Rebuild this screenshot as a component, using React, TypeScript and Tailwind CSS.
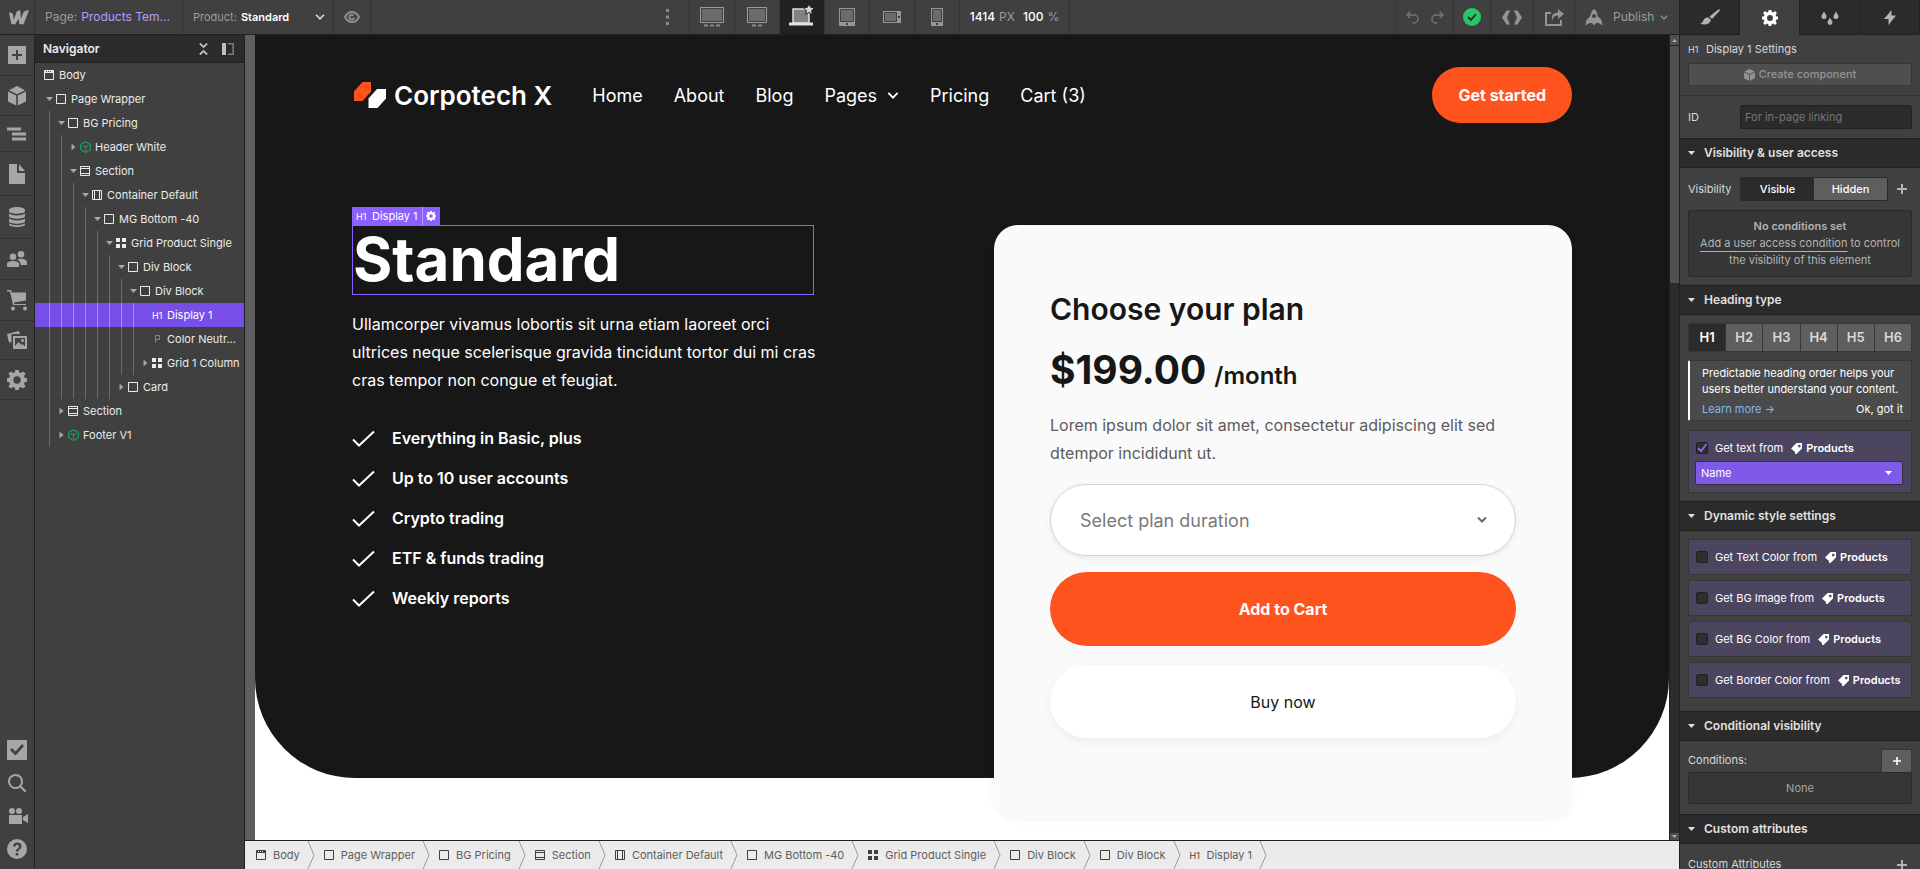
import type { ReactNode } from 'react';
import clsx from 'clsx';

/* ---------- icons ---------- */

type NodeKind = 'body' | 'box' | 'section' | 'container' | 'grid' | 'component' | 'h1' | 'paragraph';

function NodeIcon({ kind }: { kind: NodeKind }) {
    if (kind === 'h1') {
        return <span className="w-2.5 shrink-0 text-[9px] leading-none">H1</span>;
    }
    if (kind === 'component') {
        return (
            <svg viewBox="0 0 11 12" className="h-3 w-[11px] shrink-0" fill="none" stroke="#1f9d62" strokeWidth="1.2">
                <path d="M5.5 .7 10.3 3.3v5.4L5.5 11.3.7 8.7V3.3z" />
                <path d="M2.5 4.3 5.5 6l3-1.7M5.5 6v3.5" />
            </svg>
        );
    }
    if (kind === 'paragraph') {
        return (
            <svg viewBox="0 0 11 10" className="h-2.5 w-[11px] shrink-0" fill="none" stroke="#8f6cf5">
                <path d="M3.5 9V1.5h4v4h-4" />
            </svg>
        );
    }
    if (kind === 'grid') {
        return (
            <svg viewBox="0 0 10 10" className="h-2.5 w-2.5 shrink-0" fill="currentColor">
                <path d="M0 0h4v4H0zM6 0h4v4H6zM0 6h4v4H0zM6 6h4v4H6z" />
            </svg>
        );
    }
    return (
        <svg viewBox="0 0 10 10" className="h-2.5 w-2.5 shrink-0" fill="none" stroke="currentColor">
            <path d="M.5 .5h9v9h-9z" />
            {kind === 'body' && <path d="M0 1.5h2M3 1.5h1M5 1.5h1M7 1.5h3M0 2.5h10" />}
            {kind === 'section' && <path d="M0 2.5h10M0 7.5h10" />}
            {kind === 'container' && <path d="M2.5 0v10M7.5 0v10" />}
        </svg>
    );
}

const GEAR =
    'M8.3 0h3.4l.5 2.3 1.7.7 2.3-1.6 2.4 2.4L17 6.1l.7 1.7 2.3.5v3.4l-2.3.5-.7 1.7 1.6 2.3-2.4 2.4-2.3-1.6-1.7.7-.5 2.3H8.3l-.5-2.3-1.7-.7-2.3 1.6-2.4-2.4L3 13.9l-.7-1.7-2.3-.5V8.3l2.3-.5L3 6.1 1.4 3.8l2.4-2.4L6.1 3l1.7-.7zM10 6.3a3.7 3.7 0 1 0 0 7.4 3.7 3.7 0 0 0 0-7.4z';

function Gear({ className }: { className?: string }) {
    return (
        <svg viewBox="0 0 20 20" className={className} fill="currentColor" fillRule="evenodd">
            <path d={GEAR} />
        </svg>
    );
}

function Cube({ className }: { className?: string }) {
    return (
        <svg viewBox="0 0 18 20" className={className} fill="currentColor">
            <path d="M9 0 17.3 4.2 9 8.2.7 4.2zM0 5.6l8.2 4v10L0 15.5zM18 5.6l-8.2 4v10l8.2-4.1z" />
        </svg>
    );
}

function Tag() {
    return (
        <svg viewBox="0 0 12 11" className="h-[11px] w-3 shrink-0" fill="currentColor" fillRule="evenodd">
            <path d="M5.5 0H11v5.5L5.5 11H4V9L0 5.5zM8.3 1.8a1.3 1.3 0 1 0 0 2.6 1.3 1.3 0 0 0 0-2.6z" />
        </svg>
    );
}

function Plus({ className }: { className?: string }) {
    return (
        <svg viewBox="0 0 10 10" className={className} stroke="currentColor" strokeWidth="2">
            <path d="M5 0v10M0 5h10" />
        </svg>
    );
}

function Chevron({ className }: { className?: string }) {
    return (
        <svg viewBox="0 0 10 6" className={className} fill="none" stroke="currentColor" strokeWidth="1.6">
            <path d="M1 .7 5 4.8 9 .7" />
        </svg>
    );
}

/* ---------- top bar ---------- */

const devices: { label: string; icon: ReactNode; active?: boolean }[] = [
    {
        label: '1920px and up',
        icon: (
            <svg viewBox="0 0 24 20" className="h-5 w-6">
                <path d="M.5 .5h23v15H.5z" fill="#6b6b6b" stroke="#9b9b9b" />
                <path d="M1.5 1.5h21v13h-21z" fill="none" stroke="#404040" />
                <path d="M4 17.5h4v2H4zM10 17.5h4v2h-4zM16 17.5h4v2h-4z" fill="#8a8a8a" />
            </svg>
        ),
    },
    {
        label: '1440px and up',
        icon: (
            <svg viewBox="0 0 20 20" className="h-5 w-5">
                <path d="M.5 .5h19v15H.5z" fill="#6b6b6b" stroke="#9b9b9b" />
                <path d="M1.5 1.5h17v13h-17z" fill="none" stroke="#404040" />
                <path d="M5 17.5h4v2H5zM11 17.5h4v2h-4z" fill="#8a8a8a" />
            </svg>
        ),
    },
    {
        label: 'Base breakpoint',
        active: true,
        icon: (
            <svg viewBox="0 0 26 24" className="mb-1 h-6 w-[26px]">
                <path d="M4 6h16v14H4z" fill="#828282" stroke="#e0e0e0" strokeWidth="1.5" />
                <path d="M0 19.5h24v3H0z" fill="#e0e0e0" />
                <path
                    d="m20 .8 1.6 3.5 3.9.5-2.9 2.7.8 3.9-3.4-2-3.4 2 .8-3.9-2.9-2.7 3.9-.5z"
                    fill="#d9d9d9"
                    stroke="#212121"
                />
            </svg>
        ),
    },
    {
        label: 'Tablet',
        icon: (
            <svg viewBox="0 0 16 18" className="h-[18px] w-4">
                <path d="M0 0h16v18H0z" fill="#969696" />
                <path d="M1.5 1.5h13v12h-13z" fill="#6b6b6b" stroke="#404040" />
                <path d="M7 15h2v2H7z" fill="#404040" />
            </svg>
        ),
    },
    {
        label: 'Mobile landscape',
        icon: (
            <svg viewBox="0 0 18 12" className="h-3 w-[18px]">
                <path d="M0 0h18v12H0z" fill="#969696" />
                <path d="M1.5 1.5h12v9h-12z" fill="#6b6b6b" stroke="#404040" />
                <path d="M15 5h2v2h-2z" fill="#404040" />
            </svg>
        ),
    },
    {
        label: 'Mobile portrait',
        icon: (
            <svg viewBox="0 0 12 18" className="h-[18px] w-3">
                <path d="M0 0h12v18H0z" fill="#969696" />
                <path d="M1.5 1.5h9v12h-9z" fill="#6b6b6b" stroke="#404040" />
                <path d="M5 15h2v2H5z" fill="#404040" />
            </svg>
        ),
    },
];

function TopBar() {
    return (
        <header className="flex h-[35px] shrink-0 border-b border-[#212121] text-[#9b9b9b]">
            <button aria-label="Webflow" className="flex w-[35px] items-center justify-center border-r border-[#353535]">
                <svg viewBox="0 0 20 15" className="ml-1 h-[15px] w-5" fill="#a6a6a6">
                    <path d="M0 2.5c2.6-.4 3.9.6 4.2 3l.5 4c.8-1.5 1.8-4.4 2.4-6.5.4-1.5 1.8-2.7 4.2-2.5l.6 8.5 2-5.5C14.8 1.2 16.6.2 20 .2l-5.4 14h-4.2l-.9-5.7-3.1 5.7H2.3z" />
                </svg>
            </button>
            <button className="flex w-[148px] items-center gap-1 border-r border-[#353535] pl-2.5 text-[12px]">
                <span>Page:</span>
                <span className="text-[#b89aff]">Products Tem...</span>
            </button>
            <button className="flex w-[151px] items-center gap-1 border-r border-[#353535] pl-2.5 text-[11px]">
                <span>Product:</span>
                <span className="font-semibold text-white">Standard</span>
                <Chevron className="mr-2 ml-auto h-[6px] w-2.5 text-[#d9d9d9]" />
            </button>
            <button aria-label="Preview" className="flex w-[37px] items-center justify-center border-r border-[#353535]">
                <svg viewBox="0 0 16 12" className="h-3 w-4" fill="none" stroke="#8f8f8f" strokeWidth="2">
                    <path d="M1 6c2-3.500 4.300-5 7-5s5 1.500 7 5c-2 3.500-4.300 5-7 5S3 9.500 1 6z" />
                    <path d="M9.5 4.5a2.4 2.4 0 1 0 .6 2.2" />
                </svg>
            </button>

            <div className="grow-[7]" />

            <button aria-label="More breakpoints" className="flex w-[34px] items-center border-r border-[#353535] pl-2.5">
                <svg viewBox="0 0 3 16" className="h-4 w-[3px]" fill="#8a8a8a">
                    <path d="M0 0h3v3H0zM0 6.5h3v3H0zM0 13h3v3H0z" />
                </svg>
            </button>
            {devices.map((device) => (
                <button
                    key={device.label}
                    aria-label={device.label}
                    className={clsx(
                        'flex w-[45px] items-center justify-center border-r border-[#353535]',
                        device.active && 'bg-[#212121]',
                    )}
                >
                    {device.icon}
                </button>
            ))}
            <button className="flex w-[110px] items-center gap-1 border-r border-[#353535] pl-2.5 text-[12px]">
                <span className="font-medium text-white">1414</span> PX
                <span className="ml-1 font-medium text-white">100</span> %
            </button>

            <div className="grow-[8]" />

            <div className="flex w-[59px] items-center justify-center gap-3 border-x border-[#353535] text-[#737373]">
                <button aria-label="Undo">
                    <svg viewBox="0 0 13 13" className="h-[13px] w-[13px]" fill="none" stroke="currentColor" strokeWidth="1.5">
                        <path d="M4.2 .8 1 4l3.2 3.2M1 4h7a4 4 0 0 1 0 8H6.5" />
                    </svg>
                </button>
                <button aria-label="Redo">
                    <svg viewBox="0 0 13 13" className="h-[13px] w-[13px]" fill="none" stroke="currentColor" strokeWidth="1.5">
                        <path d="M8.8 .8 12 4 8.8 7.2M12 4H5a4 4 0 0 0 0 8h1.5" />
                    </svg>
                </button>
            </div>
            <button aria-label="Saved" className="flex w-[37px] items-center justify-center border-r border-[#353535]">
                <svg viewBox="0 0 18 18" className="h-[18px] w-[18px]">
                    <circle cx="9" cy="9" r="9" fill="#27c768" />
                    <path d="m5 9 3 3 5-6" fill="none" stroke="#2b2b2b" strokeWidth="1.8" />
                </svg>
            </button>
            <button aria-label="Code" className="flex w-[43px] items-center justify-center border-r border-[#353535]">
                <svg viewBox="0 0 20 15" className="h-[15px] w-5" fill="#949494">
                    <path d="M4.5 .5H8l-3 7 3 7H4.500L0 7.500zM15.500 .5H12l3 7-3 7h3.500l4.500-7z" />
                </svg>
            </button>
            <button aria-label="Share" className="flex w-[41px] items-center justify-center border-r border-[#353535]">
                <svg viewBox="0 0 19 17" className="h-[17px] w-[19px]" fill="#949494">
                    <path d="M0 3h6v2H2v10h13v-4h2v6H0z" />
                    <path d="M13 0l6 5-6 5V6.5c-3 0-5 1-5.5 5-2-5 1-8 5.5-8z" />
                </svg>
            </button>
            <button className="flex w-[104px] items-center pl-2.5 text-[12px]">
                <svg viewBox="0 0 18 17" className="mr-2.5 h-[17px] w-[18px]" fill="#949494" fillRule="evenodd">
                    <path d="M9 0c2.5 2 3.5 4.5 3.5 7l4 4 1 5.5-4-2.5H11l-2 2.5L7 14H4.500l-4 2.500 1-5.500 4-4C5.500 4.500 6.500 2 9 0zm0 5a2 2 0 1 0 0 4 2 2 0 0 0 0-4z" />
                </svg>
                Publish
                <Chevron className="ml-1.5 h-[5px] w-2" />
            </button>
        </header>
    );
}

/* ---------- left rail ---------- */

const railTools: { label: string; height: string; icon: ReactNode }[] = [
    {
        label: 'Add elements',
        height: 'h-[41px]',
        icon: <path d="M1 1h18v18H1zM9 5v4H5v2h4v4h2v-4h4V9h-4V5z" />,
    },
    {
        label: 'Components',
        height: 'h-10',
        icon: <path d="M10 0 18 4.2 10 8.2 2 4.2zM1 5.6l8.200 4v10L1 15.500zM19 5.600l-8.200 4v10l8.200-4.100z" />,
    },
    {
        label: 'Navigator',
        height: 'h-9',
        icon: <path d="M0 3.5h14v3H0zM5 8.5h14v3H5zM5 13.5h14v3H5z" />,
    },
    { label: 'Pages', height: 'h-11', icon: <path d="M2 0h8v9h8v11H2zM12 0l6 7h-6z" /> },
    {
        label: 'CMS',
        height: 'h-[43px]',
        icon: (
            <path d="M2 3c0-4 16-4 16 0v1c0 3.600-16 3.600-16 0zM2 6.500c3 2.500 13 2.500 16 0V9c0 3.600-16 3.600-16 0zM2 11.500c3 2.500 13 2.500 16 0V14c0 3.600-16 3.600-16 0zM2 16.300c3 2.500 13 2.500 16 0v1c0 3.600-16 3.600-16 0z" />
        ),
    },
    {
        label: 'Users',
        height: 'h-[41px]',
        icon: (
            <path d="M6 4.500a3.300 3.300 0 1 1 0 6.600 3.300 3.300 0 0 1 0-6.600zM14 2a3.300 3.300 0 1 1 0 6.600A3.300 3.300 0 0 1 14 2zM0 18v-3c0-4 12-4 12 0v3zM10 10.800c3-2 10-1.500 10 2.700V16h-6.500c0-3-1-4.200-3.500-5.200z" />
        ),
    },
    {
        label: 'Ecommerce',
        height: 'h-[41px]',
        icon: (
            <path d="M0 0h4l1 2.500h14v8L7 12.500 7.300 14H19v1H6L3 1.500H0zM6 16.500a2 2 0 1 1 0 4 2 2 0 0 1 0-4zM18 16.500a2 2 0 1 1 0 4 2 2 0 0 1 0-4z" />
        ),
    },
    {
        label: 'Assets',
        height: 'h-[39px]',
        icon: (
            <path d="M0 4 12 1l1 3H4.500v8L2 12.500zM6 6h14v13H6zM8 8v8l3.500-4 3 3 1-1 2.500 2.500V8zM15.500 9a1.500 1.500 0 1 1 0 3 1.500 1.500 0 0 1 0-3z" />
        ),
    },
    { label: 'Settings', height: 'h-10', icon: <path d={GEAR} /> },
];

const railHelpers: { label: string; icon: ReactNode }[] = [
    {
        label: 'Audit',
        icon: <path d="M1 0h18a1 1 0 0 1 1 1v18a1 1 0 0 1-1 1H1a1 1 0 0 1-1-1V1a1 1 0 0 1 1-1zM3 10l5.500 5.500L17 6l-2-2-6.500 7.500L5 8z" />,
    },
    {
        label: 'Search',
        icon: (
            <path d="M8.500 1a7.500 7.500 0 0 1 6 12l5 5-1.500 1.500-5-5A7.500 7.500 0 1 1 8.500 1zM8.500 3a5.500 5.500 0 1 0 0 11 5.500 5.500 0 0 0 0-11z" />
        ),
    },
    {
        label: 'Video tutorials',
        icon: (
            <path d="M5 2a3 3 0 1 1 0 6 3 3 0 0 1 0-6zM12 2a3 3 0 1 1 0 6 3 3 0 0 1 0-6zM2 9h13v9H2zM21 8v9l-5-3v-3z" />
        ),
    },
    {
        label: 'Help',
        icon: (
            <path d="M10 0a10 10 0 1 1 0 20 10 10 0 0 1 0-20zM6 7.500h2.500C8.500 5 12 5.200 12 7.500c0 2-3.200 2.200-3.200 5h2.500c0-2 3.200-2.500 3.200-5.300C14.500 2.200 6 2.500 6 7.500zM8.700 14v2.500h2.600V14z" />
        ),
    },
];

function LeftRail() {
    return (
        <aside className="flex w-[35px] shrink-0 flex-col border-r border-[#212121] text-[#a6a6a6]">
            {railTools.map((tool) => (
                <button
                    key={tool.label}
                    aria-label={tool.label}
                    className={clsx('flex shrink-0 items-center justify-center border-b border-[#333]', tool.height)}
                >
                    <svg viewBox="0 0 20 20" className="h-5 w-5 overflow-visible" fill="currentColor" fillRule="evenodd">
                        {tool.icon}
                    </svg>
                </button>
            ))}
            <div className="mt-auto flex flex-col pb-1">
                {railHelpers.map((tool) => (
                    <button key={tool.label} aria-label={tool.label} className="flex h-[33px] items-center justify-center">
                        <svg viewBox="0 0 20 20" className="h-5 w-5 overflow-visible" fill="currentColor" fillRule="evenodd">
                            {tool.icon}
                        </svg>
                    </button>
                ))}
            </div>
        </aside>
    );
}

/* ---------- navigator ---------- */

interface TreeRow {
    label: string;
    kind: NodeKind;
    depth: number;
    state?: 'open' | 'closed';
    selected?: boolean;
}

const treeRows: TreeRow[] = [
    { label: 'Page Wrapper', kind: 'box', depth: 0, state: 'open' },
    { label: 'BG Pricing', kind: 'box', depth: 1, state: 'open' },
    { label: 'Header White', kind: 'component', depth: 2, state: 'closed' },
    { label: 'Section', kind: 'section', depth: 2, state: 'open' },
    { label: 'Container Default', kind: 'container', depth: 3, state: 'open' },
    { label: 'MG Bottom -40', kind: 'box', depth: 4, state: 'open' },
    { label: 'Grid Product Single', kind: 'grid', depth: 5, state: 'open' },
    { label: 'Div Block', kind: 'box', depth: 6, state: 'open' },
    { label: 'Div Block', kind: 'box', depth: 7, state: 'open' },
    { label: 'Display 1', kind: 'h1', depth: 8, selected: true },
    { label: 'Color Neutr...', kind: 'paragraph', depth: 8 },
    { label: 'Grid 1 Column', kind: 'grid', depth: 8, state: 'closed' },
    { label: 'Card', kind: 'box', depth: 6, state: 'closed' },
    { label: 'Section', kind: 'section', depth: 1, state: 'closed' },
    { label: 'Footer V1', kind: 'component', depth: 1, state: 'closed' },
];

function Navigator() {
    return (
        <nav className="flex w-[210px] shrink-0 flex-col border-r border-[#212121] text-[11px] text-[#ebebeb]">
            <div className="flex h-7 items-center border-b border-[#212121] bg-[#2b2b2b] pr-2.5 pl-2">
                <h2 className="text-[12px] font-semibold">Navigator</h2>
                <button aria-label="Collapse all" className="ml-auto text-[#bdbdbd]">
                    <svg viewBox="0 0 9 12" className="h-3 w-[9px]" fill="none" stroke="currentColor" strokeWidth="1.8">
                        <path d="M.8 .5 4.5 4 8.2 .5M.8 11.5 4.5 8l3.7 3.5" />
                    </svg>
                </button>
                <button aria-label="Dock panel" className="ml-3.5">
                    <svg viewBox="0 0 12 12" className="h-3 w-3">
                        <path d="M0 0h4v12H0z" fill="#bdbdbd" />
                        <path d="M6 .8h5.2v10.4H6" fill="none" stroke="#7d7d7d" strokeWidth="1.5" />
                    </svg>
                </button>
            </div>
            <div className="flex h-6 items-center gap-[5px] pl-[9px]">
                <NodeIcon kind="body" />
                Body
            </div>
            {treeRows.map((row, index) => (
                <div
                    key={index}
                    className={clsx('flex h-6 items-center pl-2 whitespace-nowrap', row.selected && 'bg-[#774ee8] text-white')}
                >
                    {Array.from({ length: row.depth }, (_, level) => (
                        <span key={level} className="flex h-6 w-3 shrink-0 justify-end pr-[5px]">
                            <span className={clsx('w-px', row.selected ? 'bg-[#a68bf0]' : 'bg-[#6b6b6b]')} />
                        </span>
                    ))}
                    <span className="mr-px flex w-3 shrink-0 justify-center text-[#a6a6a6]">
                        {row.state && (
                            <svg viewBox="0 0 7 8" className="h-2 w-[7px]" fill="currentColor">
                                <path d={row.state === 'open' ? 'M0 2h7L3.5 6z' : 'M1.5 .5v7l4-3.5z'} />
                            </svg>
                        )}
                    </span>
                    <span className="flex w-[15px] shrink-0">
                        <NodeIcon kind={row.kind} />
                    </span>
                    {row.label}
                </div>
            ))}
        </nav>
    );
}

/* ---------- canvas ---------- */

const features = ['Everything in Basic, plus', 'Up to 10 user accounts', 'Crypto trading', 'ETF & funds trading', 'Weekly reports'];

function Canvas() {
    return (
        <div className="min-w-0 flex-1 overflow-hidden bg-white">
            <section className="rounded-b-[100px] bg-[#171717] px-[97px] pt-8 text-white">
                <div className="flex h-14 items-center text-[18px]">
                    <a href="#" className="flex items-center gap-2 text-[26px] font-semibold">
                        <svg viewBox="0 0 32 27" className="ml-0.5 h-[27px] w-8">
                            <path d="M8.500 0H17v9.500L8.500 19H0V9.500z" fill="#ff531e" />
                            <path d="M23 7h9v9.500L23.500 26H14.500v-9.500z" fill="#fff" />
                        </svg>
                        Corpotech X
                    </a>
                    <div className="ml-10 flex items-center gap-[31px]">
                        <a href="#">Home</a>
                        <a href="#">About</a>
                        <a href="#">Blog</a>
                        <a href="#" className="flex items-center gap-2.5">
                            Pages
                            <Chevron className="h-[7px] w-3" />
                        </a>
                        <a href="#">Pricing</a>
                        <a href="#">Cart (3)</a>
                    </div>
                    <button className="ml-auto h-full rounded-full bg-[#ff531e] px-[26px] text-[16px] font-bold">Get started</button>
                </div>

                <div className="mt-[102px] grid grid-cols-[minmax(0,462fr)_minmax(0,578fr)] gap-[180px]">
                    <div>
                        <div className="relative border border-[#8a61ff]">
                            <div className="absolute bottom-[calc(100%+1px)] -left-px flex h-[18px] items-center bg-[#8a61ff] text-[11px] whitespace-nowrap">
                                <span className="flex items-center gap-1.5 px-1">
                                    <NodeIcon kind="h1" />
                                    Display 1
                                </span>
                                <button aria-label="Element settings" className="flex h-full w-[18px] items-center justify-center border-l border-[#b89fff]">
                                    <Gear className="h-2.5 w-2.5" />
                                </button>
                            </div>
                            <h1 className="pb-0.5 text-[60px] leading-[66px] font-bold">Standard</h1>
                        </div>
                        <p className="mt-[15px] -mr-3 text-[16px] leading-7">
                            Ullamcorper vivamus lobortis sit urna etiam laoreet orci ultrices neque scelerisque gravida tincidunt
                            tortor dui mi cras cras tempor non congue et feugiat.
                        </p>
                        <ul className="mt-8 space-y-4 text-[16px] font-semibold">
                            {features.map((feature) => (
                                <li key={feature} className="flex h-6 items-center gap-[17px]">
                                    <svg viewBox="0 0 23 17" className="h-[17px] w-[23px]" fill="none" stroke="#fff" strokeWidth="2">
                                        <path d="m1 9.500 6 6L22 1.500" />
                                    </svg>
                                    {feature}
                                </li>
                            ))}
                        </ul>
                    </div>

                    <form className="-mb-10 flex flex-col rounded-3xl bg-[#fafafa] px-14 pt-[66px] pb-20 text-[#171717] shadow-[0_2px_8px_rgba(0,0,0,0.05)]">
                        <h2 className="text-[30px] leading-9 font-semibold">Choose your plan</h2>
                        <div className="mt-[19px] flex h-12 items-baseline gap-2 leading-[48px]">
                            <span className="text-[39px] font-bold">$199.00</span>
                            <span className="text-[24px] leading-6 font-semibold">/month</span>
                        </div>
                        <p className="mt-[17px] text-[16px] leading-7 text-[#5c5c5c]">
                            Lorem ipsum dolor sit amet, consectetur adipiscing elit sed dtempor incididunt ut.
                        </p>
                        <div className="relative mt-[17px]">
                            <select
                                aria-label="Plan duration"
                                className="h-[72px] w-full appearance-none rounded-full border border-[#d4d4d4] bg-white px-[29px] text-[18px] text-[#7a7a7a] shadow-[0_2px_6px_rgba(0,0,0,0.07)]"
                            >
                                <option>Select plan duration</option>
                            </select>
                            <svg
                                viewBox="0 0 10 8"
                                className="pointer-events-none absolute top-8 right-[29px] h-2 w-2.5"
                                fill="none"
                                stroke="#6b6b6b"
                                strokeWidth="2"
                            >
                                <path d="m1 1.5 4 4 4-4" />
                            </svg>
                        </div>
                        <button type="button" className="mt-4 h-[74px] rounded-full bg-[#ff531e] text-[16px] font-bold text-white">
                            Add to Cart
                        </button>
                        <button type="button" className="mt-[19px] h-[73px] rounded-full bg-white text-[16px] shadow-[0_4px_10px_rgba(0,0,0,0.05)]">
                            Buy now
                        </button>
                    </form>
                </div>
            </section>
        </div>
    );
}

function Scrollbar() {
    return (
        <div className="flex w-2.5 shrink-0 flex-col border-l border-[#212121] bg-[#2b2b2b] text-[#adadad]">
            <div className="flex h-[11px] items-center justify-center border-b border-[#212121] bg-[#4f4f4f]">
                <svg viewBox="0 0 5 3" className="h-[3px] w-[5px]" fill="currentColor">
                    <path d="M0 3h5L2.5 0z" />
                </svg>
            </div>
            <div className="h-[237px] bg-[#4f4f4f]" />
            <div className="mt-auto flex h-[7px] items-center justify-center bg-[#4f4f4f]">
                <svg viewBox="0 0 5 3" className="h-[3px] w-[5px]" fill="currentColor">
                    <path d="M0 0h5L2.5 3z" />
                </svg>
            </div>
        </div>
    );
}

const crumbs: { label: string; kind: NodeKind }[] = [
    { label: 'Body', kind: 'body' },
    { label: 'Page Wrapper', kind: 'box' },
    { label: 'BG Pricing', kind: 'box' },
    { label: 'Section', kind: 'section' },
    { label: 'Container Default', kind: 'container' },
    { label: 'MG Bottom -40', kind: 'box' },
    { label: 'Grid Product Single', kind: 'grid' },
    { label: 'Div Block', kind: 'box' },
    { label: 'Div Block', kind: 'box' },
    { label: 'Display 1', kind: 'h1' },
];

function Breadcrumbs() {
    return (
        <div className="flex h-[29px] shrink-0 border-t border-[#212121] bg-[#ebebeb] pl-0.5 text-[11px] text-[#5e5e5e]">
            {crumbs.map((crumb, index) => (
                <button key={index} className="flex items-center gap-[7px] pl-[9px] whitespace-nowrap">
                    <span className="flex text-[#404040]">
                        <NodeIcon kind={crumb.kind} />
                    </span>
                    {crumb.label}
                    <svg viewBox="0 0 8 28" className="h-7 w-2" fill="none" stroke="#9b9b9b">
                        <path d="M1 0l6 14-6 14" />
                    </svg>
                </button>
            ))}
        </div>
    );
}

/* ---------- settings panel ---------- */

function PanelSection({ title, children }: { title: string; children: ReactNode }) {
    return (
        <section>
            <h3 className="flex h-[30px] items-center gap-[9px] border-y border-[#212121] bg-[#2b2b2b] pl-2 text-[12px] font-semibold text-[#e0e0e0]">
                <svg viewBox="0 0 7 4" className="h-1 w-[7px]" fill="currentColor">
                    <path d="M0 0h7L3.5 4z" />
                </svg>
                {title}
            </h3>
            {children}
        </section>
    );
}

function BindingCheckbox({ label, checked }: { label: string; checked?: boolean }) {
    return (
        <label className="flex h-4 items-center whitespace-nowrap text-white">
            <span className="relative mr-[7px] flex">
                <input
                    type="checkbox"
                    defaultChecked={checked}
                    className="peer h-3 w-3 appearance-none rounded-[2px] border border-[#212121] bg-[#2e2e2e]"
                />
                <svg
                    viewBox="0 0 12 12"
                    className="pointer-events-none absolute inset-0 hidden h-3 w-3 peer-checked:block"
                    fill="none"
                    stroke="#8a61ff"
                    strokeWidth="2"
                >
                    <path d="m2 6 3 3 5.5-7" />
                </svg>
            </span>
            {label}
            <span className="ml-2 flex items-center gap-[3px] font-semibold">
                <Tag />
                Products
            </span>
        </label>
    );
}

const styleBindings = ['Get Text Color from', 'Get BG Image from', 'Get BG Color from', 'Get Border Color from'];
const headingLevels = ['H1', 'H2', 'H3', 'H4', 'H5', 'H6'];

const panelTabs: { label: string; icon: ReactNode; active?: boolean }[] = [
    {
        label: 'Style',
        icon: (
            <svg viewBox="0 0 20 16" className="h-4 w-5" fill="currentColor">
                <path d="M19 0c1 .6 1 1.400.3 2.200L12 10 9.500 7.600zM8.500 8.500 11 11c-1.500 5-7 5.500-11 3.500 3-.5 2.500-2 4-4.300 1.200-1.700 3-2 4.500-1.700z" />
            </svg>
        ),
    },
    { label: 'Settings', active: true, icon: <Gear className="h-4 w-4" /> },
    {
        label: 'Interactions',
        icon: (
            <svg viewBox="0 0 18 15" className="h-[15px] w-[18px]" fill="currentColor">
                <path d="M3 1.500C4 4 5.500 4.800 5.500 6.500a2.500 2.500 0 0 1-5 0C.5 4.800 2 4 3 1.500zM15 1.500c1 2.500 2.500 3.300 2.500 5a2.500 2.500 0 0 1-5 0c0-1.700 1.500-2.500 2.500-5zM9 7.500c1 2.500 2.500 3.300 2.500 5a2.500 2.500 0 0 1-5 0c0-1.700 1.500-2.500 2.500-5z" />
            </svg>
        ),
    },
    {
        label: 'Effects',
        icon: (
            <svg viewBox="0 0 12 15" className="h-[15px] w-3" fill="currentColor">
                <path d="M7.5 0v5.500H12L4.500 15V9H0z" />
            </svg>
        ),
    },
];

function SettingsPanel() {
    return (
        <aside className="flex w-[241px] shrink-0 flex-col overflow-hidden border-l border-[#212121] text-[11px] text-[#d9d9d9]">
            <div role="tablist" className="flex h-[35px] shrink-0">
                {panelTabs.map((tab) => (
                    <button
                        key={tab.label}
                        role="tab"
                        aria-label={tab.label}
                        className={clsx(
                            'flex flex-1 items-center justify-center border-r border-[#212121]',
                            tab.active ? 'text-white' : 'border-b bg-[#2b2b2b] text-[#b3b3b3]',
                        )}
                    >
                        {tab.icon}
                    </button>
                ))}
            </div>

            <div className="flex flex-col border-b border-[#333] px-2 pt-1.5 pb-[9px]">
                <div className="flex h-4 items-center gap-2">
                    <NodeIcon kind="h1" />
                    Display 1 Settings
                </div>
                <button className="mt-1.5 flex h-[23px] items-center justify-center gap-1 rounded-[2px] border border-[#363636] bg-[#4f4f4f] font-medium text-[#949494]">
                    <Cube className="h-3 w-[11px]" />
                    Create component
                </button>
            </div>
            <div className="flex items-center px-2 py-[9px]">
                <label htmlFor="element-id" className="w-[52px] shrink-0">
                    ID
                </label>
                <input
                    id="element-id"
                    placeholder="For in-page linking"
                    className="h-6 min-w-0 flex-1 rounded-[2px] border border-[#212121] bg-[#2b2b2b] px-1 placeholder:text-[#757575]"
                />
            </div>

            <PanelSection title="Visibility & user access">
                <div className="px-2 pt-[9px] pb-2">
                    <div className="flex items-center">
                        <span className="w-[52px] shrink-0">Visibility</span>
                        <div className="flex h-6 flex-1 overflow-hidden rounded-[2px] border border-[#2b2b2b] font-medium text-white">
                            <button className="flex-1 bg-[#2b2b2b]">Visible</button>
                            <button className="flex-1 bg-[#5e5e5e]">Hidden</button>
                        </div>
                        <button aria-label="Add condition" className="flex w-6 justify-end pr-[5px] text-[#b3b3b3]">
                            <Plus className="h-2.5 w-2.5" />
                        </button>
                    </div>
                    <div className="mt-[9px] rounded-[2px] border border-[#2b2b2b] bg-[#363636] px-2 py-[7px] text-center leading-[17px] text-[#b3b3b3]">
                        <p className="font-semibold">No conditions set</p>
                        <p>
                            <a href="#" className="underline underline-offset-4">
                                Add a user access condition
                            </a>{' '}
                            to control
                            <br />
                            the visibility of this element
                        </p>
                    </div>
                </div>
            </PanelSection>

            <PanelSection title="Heading type">
                <div className="px-2 py-2">
                    <div className="flex h-[29px] divide-x divide-[#363636] overflow-hidden rounded-[2px] border border-[#363636] text-[13px] font-semibold">
                        {headingLevels.map((level, index) => (
                            <button key={level} className={clsx('flex-1', index === 0 ? 'bg-[#2b2b2b] text-white' : 'bg-[#5e5e5e]')}>
                                {level}
                            </button>
                        ))}
                    </div>
                    <div className="mt-2 rounded-[2px] border border-l-2 border-[#363636] border-l-white bg-[#4a4a4a] pt-1 pr-2 pb-[3px] pl-3 leading-4 text-white">
                        <p>Predictable heading order helps your users better understand your content.</p>
                        <div className="mt-1 flex justify-between">
                            <a href="#" className="text-[#82b8f5]">
                                Learn more →
                            </a>
                            <button>Ok, got it</button>
                        </div>
                    </div>
                    <div className="mt-[9px] rounded-[2px] border border-[#363636] bg-[#4c4560] pt-[9px] pr-2 pb-[7px] pl-1.5">
                        <div className="pl-px">
                            <BindingCheckbox label="Get text from" checked />
                        </div>
                        <div className="relative mt-[5px]">
                            <select
                                aria-label="Source field"
                                className="h-6 w-full appearance-none rounded-[2px] border border-[#333] bg-[#7f5ae8] px-[5px] text-white"
                            >
                                <option>Name</option>
                            </select>
                            <svg viewBox="0 0 7 4" className="pointer-events-none absolute top-2.5 right-[11px] h-1 w-[7px]" fill="#fff">
                                <path d="M0 0h7L3.5 4z" />
                            </svg>
                        </div>
                    </div>
                </div>
            </PanelSection>

            <PanelSection title="Dynamic style settings">
                <div className="space-y-[5px] px-2 pt-2 pb-[13px]">
                    {styleBindings.map((label) => (
                        <div key={label} className="flex h-9 items-center rounded-[2px] border border-[#363636] bg-[#4c4560] px-[7px]">
                            <BindingCheckbox label={label} />
                        </div>
                    ))}
                </div>
            </PanelSection>

            <PanelSection title="Conditional visibility">
                <div className="px-2 pt-2 pb-2.5">
                    <div className="flex items-center justify-between">
                        Conditions:
                        <button
                            aria-label="New condition"
                            className="flex h-[23px] w-[31px] items-center justify-center rounded-t-[2px] border border-b-0 border-[#363636] bg-[#5e5e5e] text-white"
                        >
                            <Plus className="h-2 w-2" />
                        </button>
                    </div>
                    <div className="flex h-8 items-center justify-center rounded-[2px] border border-[#2b2b2b] bg-[#363636] text-[#a6a6a6]">
                        None
                    </div>
                </div>
            </PanelSection>

            <PanelSection title="Custom attributes">
                <div className="flex items-center justify-between pt-[15px] pr-[13px] pl-2 leading-[11px]">
                    Custom Attributes
                    <button aria-label="Add attribute" className="text-[#b3b3b3]">
                        <Plus className="h-2.5 w-2.5" />
                    </button>
                </div>
            </PanelSection>
        </aside>
    );
}

export default function App() {
    return (
        <div className="flex h-screen overflow-hidden bg-[#404040] font-['Inter',sans-serif]">
            <div className="flex min-w-0 flex-1 flex-col">
                <TopBar />
                <div className="flex min-h-0 flex-1">
                    <LeftRail />
                    <Navigator />
                    <div className="flex min-w-0 flex-1 flex-col">
                        <main className="flex min-h-0 flex-1 bg-[#5e5e5e] pl-2.5">
                            <Canvas />
                            <Scrollbar />
                        </main>
                        <Breadcrumbs />
                    </div>
                </div>
            </div>
            <SettingsPanel />
        </div>
    );
}
